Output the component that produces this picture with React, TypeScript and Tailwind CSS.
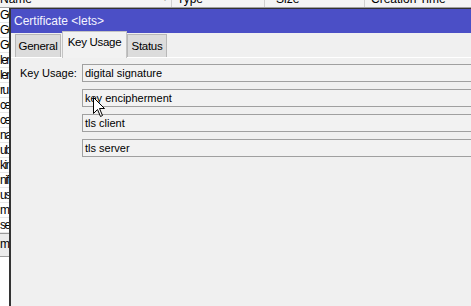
import { useState } from "react";

const listRows = ["GC", "GC", "GC", "ler", "ler", "ru", "ce", "ce", "na", "ub", "kin", "nif", "us", "m-", "se"];

const usages = ["digital signature", "key encipherment", "tls client", "tls server"];

const tabs = ["General", "Key Usage", "Status"];

const Cursor = () => (
    <svg className="absolute left-[93px] top-[97px]" width="13" height="21" viewBox="0 0 13 21">
        <path d="M0.5 0.5 L0.5 16.5 L4.5 12.5 L7.5 19.5 L9.5 18.5 L6.5 11.5 L11.5 11.5 Z" fill="#fff" stroke="#000" strokeWidth="1" strokeLinejoin="miter" />
    </svg>
);

const App = () => {
    const [active, setActive] = useState("Key Usage");

    return (
        <div className="relative w-[471px] h-[306px] overflow-hidden bg-white text-[11px] text-black font-['Liberation_Sans',Arial,sans-serif]">
            {/* list window behind */}
            <div className="flex flex-col -mt-[10px]">
                <div className="flex h-[18px] items-center border-b border-[#a0a0a0] bg-[#f4f4f4] text-[12px]">
                    <div className="w-[172px] flex justify-between pr-[4px] border-r border-[#d0d0d0] h-full items-center">
                        <span>Name</span>
                        <span className="text-[#888] text-[9px]">/</span>
                    </div>
                    <div className="w-[93px] pl-[5px] border-r border-[#d0d0d0] h-full flex items-center">Type</div>
                    <div className="w-[100px] pl-[11px] border-r border-[#d0d0d0] h-full flex items-center">Size</div>
                    <div className="flex-1 pl-[6px] h-full flex items-center">Creation Time</div>
                </div>
                {listRows.map((r, i) => (
                    <div key={i} className="h-[15px] leading-[14px] border-b border-[#e6e6e6] whitespace-nowrap text-[12px] tracking-[-1.5px]">{r}</div>
                ))}
                <div className="h-[24px] bg-[#ececec] border-t border-[#9a9a9a] border-b border-b-[#a0a0a0] leading-[20px] whitespace-nowrap text-[12px] tracking-[-1.5px]">ms</div>
            </div>

            {/* dialog */}
            <div className="absolute left-[9px] top-[8px] w-[480px] h-[310px] flex flex-col border-l-2 border-t border-[#333] bg-[#f0f0f0]">
                <div className="h-[24px] shrink-0 bg-[#4b4fc6] text-[#f4f4ff] text-[12px] flex items-center pl-[3px]">Certificate &lt;lets&gt;</div>
                <div className="h-[25px] shrink-0 flex items-end pl-[4px] border-b border-white">
                    {tabs.map((t) =>
                        t === active ? (
                            <button key={t} onClick={() => setActive(t)} className="h-[27px] -mb-px w-[65px] pb-[4px] bg-[#f2f2f2] border border-b-0 border-[#c4c4c4] relative z-10 text-[11.5px] tracking-[-0.3px]">
                                {t}
                            </button>
                        ) : (
                            <button key={t} onClick={() => setActive(t)} className={`h-[23px] pt-[1px] bg-[#dcdcdc] border border-b-0 border-[#b8b8b8] text-[11.5px] tracking-[-0.3px] ${t === "General" ? "w-[46px] mr-[1px]" : "w-[40px]"}`}>
                                {t}
                            </button>
                        )
                    )}
                </div>
                <div className="flex pt-[6px] pl-[9px]">
                    <div className="w-[62px] h-[18px] leading-[18px] shrink-0">Key Usage:</div>
                    <div className="flex-1 flex flex-col gap-[7px]">
                        {usages.map((u) => (
                            <div key={u} className="h-[18px] leading-[16px] pl-[2px] border border-[#a0a0a0] bg-[#f2f2f2] whitespace-nowrap">{u}</div>
                        ))}
                    </div>
                </div>
            </div>

            <Cursor />
        </div>
    );
};

export default App;
